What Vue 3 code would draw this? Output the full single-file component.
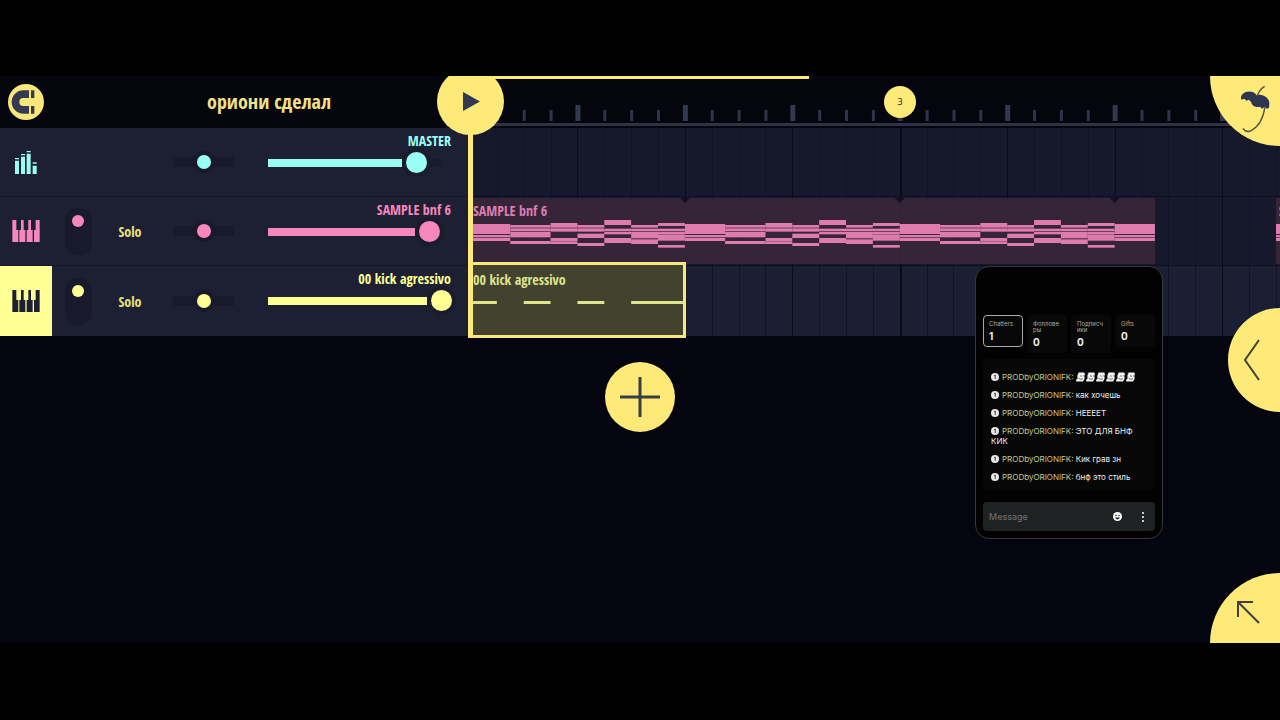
<script setup>
import { ref } from 'vue'

const TICK = 26.86
const tracks = ref([
  { id: 'master', name: 'MASTER', color: '#99fff5', icon: 'mixer', volume: 85.8, pan: 50, on: true },
  { id: 'sample', name: 'SAMPLE bnf 6', color: '#f587bd', icon: 'keys', volume: 93.2, pan: 50, on: true },
  { id: 'kick', name: '00 kick agressivo', color: '#feff95', icon: 'keys', volume: 100, pan: 50, on: true, selected: true }
])

const ticks = Array.from({ length: 31 }, (_, i) => ({ i, x: i * TICK, major: i % 4 === 0, bar: i % 16 === 0 }))

/* One bar of the melody: [start tick, length, [[top, bottom], ...]], heights in thirds of a pixel */
const pattern = [
  [0, 1.5, [[87, 117], [120, 127], [129, 138]]],
  [1.5, 1.5, [[90, 98], [100, 109], [111, 127], [138, 147]]],
  [3, 1, [[84, 98], [100, 110], [129, 138], [139, 147]]],
  [4, 1, [[90, 98], [100, 110], [116, 129], [144, 153]]],
  [5, 1, [[75, 90], [101, 109], [111, 118], [129, 144]]],
  [6, 1, [[90, 98], [101, 109], [111, 130], [133, 147]]],
  [7, 1, [[84, 93], [101, 109], [111, 119], [120, 137], [150, 158]]]
]
const notes = []
for (let bar = 0; bar < 4; bar++) {
  for (const [start, len, bands] of pattern) {
    if (bar === 3 && start > 0) continue
    for (const [a, b] of bands) {
      notes.push({ x: (bar * 8 + start) * TICK, w: len * TICK, y: (a - 9) / 3, h: (b - a) / 3 })
    }
  }
}
const kicks = [[0, 1], [2, 1], [4, 1], [6, 2]]

const stats = [
  { lines: ['Chatters'], value: 1, active: true },
  { lines: ['Фоллове', 'ры'], value: 0 },
  { lines: ['Подписч', 'ики'], value: 0 },
  { lines: ['Gifts'], value: 0 }
]
const messages = [
  { text: '', stickers: 6 },
  { text: 'как хочешь' },
  { text: 'НЕЕЕЕТ' },
  { text: 'ЭТО ДЛЯ БНФ КИК' },
  { text: 'Кик грав зн' },
  { text: 'бнф это стиль' }
]
</script>

<template>
  <div class="screen">
    <main class="stage">
      <header class="top">
        <div class="top-left">
          <button class="magnet" aria-label="Snap">
            <svg viewBox="24 42 108 108" width="36" height="36">
              <path d="M87 61H70A35 35 0 0 0 70 131H87V108H70A12 12 0 0 1 70 84H87ZM93 61h10v23h-10zM93 108h10v23h-10z" />
            </svg>
          </button>
          <h1>ориони сделал</h1>
        </div>
        <div class="ruler">
          <svg class="ruler-svg" width="100%" height="52">
            <template v-for="t in ticks" :key="t.i">
              <rect v-if="t.major" :x="t.x - 2" y="29" width="5" height="16" fill="#34384f" />
              <rect v-else :x="t.x - 1" y="34" width="3" height="11" fill="#30334a" />
            </template>
            <rect x="0" y="47" width="100%" height="3" fill="#2e3249" />
            <rect x="0" y="0" width="339" height="3" fill="#fdea79" />
          </svg>
          <span class="marker">3</span>
        </div>
        <button class="play" aria-label="Play">
          <svg viewBox="0 0 17 19" width="17" height="19"><path d="M0 0L17 9.500L0 19Z" /></svg>
        </button>
      </header>

      <section class="arrange">
        <div class="strips">
          <div v-for="t in tracks" :key="t.id" class="strip" :class="{ selected: t.selected }" :style="{ '--c': t.color }">
            <button class="kind" :aria-label="t.name">
              <svg v-if="t.icon === 'mixer'" viewBox="45 243 66 69" width="22" height="23">
                <path d="M45 264h12v4h-12zM45 272h12v40h-12zM63 252h12v4h-12zM63 260h12v52h-12zM80 243h12v4h-12zM80 251h12v61h-12zM98 277h12v4h-12zM98 287h12v25h-12z" />
              </svg>
              <svg v-else viewBox="35 78 84 66" width="28" height="22">
                <path d="M36 78H48V108H54V144H36ZM62 78H70V108H75V144H57V108H62ZM84 78H92V108H97V144H79V108H84ZM106 78H118V144H101V108H106Z" />
              </svg>
            </button>
            <template v-if="t.id !== 'master'">
              <input v-model="t.on" class="mute" type="checkbox" :aria-label="t.name + ' on'" />
              <button class="solo">Solo</button>
            </template>
            <input v-model="t.pan" class="pan" type="range" min="0" max="100" :aria-label="t.name + ' pan'" />
            <div class="level">
              <label :for="'vol-' + t.id">{{ t.name }}</label>
              <input :id="'vol-' + t.id" v-model="t.volume" class="vol" type="range" min="0" max="100" step="0.1" :style="{ '--v': t.volume / 100 }" />
            </div>
          </div>
        </div>

        <div class="canvas">
          <div class="lane first"></div>
          <div class="lane second"></div>
          <div class="lane third"></div>
          <svg class="grid" width="100%" height="100%">
            <rect v-for="t in ticks" :key="t.i" :x="Math.round(t.x)" y="0" :width="t.bar ? 2 : 1" height="100%" :fill="t.major ? '#090b18' : '#101323'" />
          </svg>
          <div class="clip sample" :style="{ width: 25.5 * TICK + 'px' }">
            <svg width="100%" height="66" shape-rendering="geometricPrecision">
              <rect v-for="(n, i) in notes" :key="i" :x="n.x" :y="n.y" :width="n.w" :height="n.h" fill="#de7cae" />
              <path v-for="b in 3" :key="'m' + b" :transform="`translate(${b * 8 * TICK} 0)`" d="M-5 0H5L0 5Z" fill="#140f20" />
            </svg>
            <span>SAMPLE bnf 6</span>
          </div>
          <div class="clip sample next" :style="{ left: 30 * TICK + 'px' }">
            <svg width="100%" height="66">
              <rect v-for="(n, i) in notes.slice(0, 3)" :key="i" x="0" :y="n.y" width="60" :height="n.h" fill="#de7cae" />
            </svg>
            <span>SAMPLE bnf 6</span>
          </div>
          <div class="clip kick">
            <svg width="100%" height="100%">
              <rect v-for="k in kicks" :key="k[0]" :x="k[0] * TICK" y="36" :width="k[1] * TICK" height="3" fill="#dfe58d" />
            </svg>
            <span>00 kick agressivo</span>
          </div>
          <div class="playhead"></div>
        </div>
      </section>

      <button class="add" aria-label="Add track">
        <svg viewBox="0 0 40 40" width="40" height="40"><path d="M20 0V40M0 20H40" /></svg>
      </button>

      <button class="corner tree" aria-label="Menu">
        <svg viewBox="1140 45 93 144" width="31" height="48">
          <path d="M1143 85C1142 70 1160 60 1178 66C1185 68 1188 74 1190 76C1206 70 1228 82 1228 100L1227 114L1220 116L1215 110L1206 116L1200 110C1188 114 1176 107 1173 96L1167 89L1159 92L1153 86L1144 89Z" fill="#2d3550" />
          <path d="M1192 77C1196 65 1204 55 1214 49M1215 110C1210 145 1195 170 1175 181C1165 187 1155 184 1149 175" fill="none" stroke="#57503f" stroke-width="4" />
        </svg>
      </button>
      <button class="corner back" aria-label="Open panel">
        <svg viewBox="0 0 18 44" width="18" height="44"><path d="M16 2L2 22L16 42" /></svg>
      </button>
      <button class="corner expand" aria-label="Expand">
        <svg viewBox="0 0 24 24" width="24" height="24"><path d="M17 2H2V17M2 2L23 23" /></svg>
      </button>

      <aside class="chat">
        <div class="stats">
          <button v-for="s in stats" :key="s.lines[0]" class="stat" :class="{ active: s.active }">
            <small><template v-for="(l, i) in s.lines" :key="l"><br v-if="i" />{{ l }}</template></small>
            <b>{{ s.value }}</b>
          </button>
        </div>
        <ul class="log">
          <li v-for="(m, i) in messages" :key="i">
            <svg class="avatar" viewBox="0 0 16 16" width="8" height="8">
              <circle cx="8" cy="8" r="8" fill="#e8e8e8" />
              <path d="M6 6L8.500 4V12" fill="none" stroke="#444" stroke-width="2" />
            </svg>
            <a href="#">PRODbyORIONIFK:</a> {{ m.text }}
            <svg v-for="n in m.stickers || 0" :key="n" class="sticker" viewBox="0 0 28 30" width="9" height="10">
              <path d="M8 1H26L28 9L26 13L27 20L22 29H1L0 24L5 20L4 12Z" fill="#f4f4f4" />
              <path d="M12 13Q15 9 18 13M22 12L27 10M8 19Q15 25 22 20" fill="none" stroke="#222" stroke-width="2" />
            </svg>
          </li>
        </ul>
        <div class="compose">
          <input type="text" placeholder="Message" aria-label="Message" />
          <button aria-label="Emoji">
            <svg viewBox="0 0 18 18" width="9" height="9">
              <circle cx="9" cy="9" r="9" fill="#fff" />
              <circle cx="6" cy="7" r="1.500" fill="#222" /><circle cx="12" cy="7" r="1.500" fill="#222" />
              <path d="M4 11H14Q12 15 9 15T4 11Z" fill="#222" />
            </svg>
          </button>
          <button aria-label="More">
            <svg viewBox="0 0 4 10" width="4" height="10" fill="#fff">
              <circle cx="2" cy="1" r="1" /><circle cx="2" cy="5" r="1" /><circle cx="2" cy="9" r="1" />
            </svg>
          </button>
        </div>
      </aside>
    </main>
  </div>
</template>

<style>
body { background: #000; }
</style>

<style scoped>
* { box-sizing: border-box; }
button { border: 0; padding: 0; margin: 0; background: none; font: inherit; color: inherit; cursor: pointer; }
svg { display: block; }
.screen {
  min-height: 100vh;
  padding: 76px 0 77px;
  display: flex;
  background: #000;
  font-family: "Noto Sans Condensed", "Open Sans Condensed", "Open Sans", "Noto Sans", sans-serif;
}
.stage {
  flex: 1;
  min-width: 0;
  position: relative;
  overflow: hidden;
  display: flex;
  flex-direction: column;
  background: #04050e;
}
.top { display: flex; height: 52px; position: relative; z-index: 2; background: #05050e; }
.top-left { flex: 0 0 470px; display: flex; align-items: center; padding-left: 8px; }
.magnet { width: 36px; height: 36px; border-radius: 50%; background: #fbe67b; fill: #343a52; }
h1 { flex: 1; margin: 0; padding-right: 139px; text-align: right; white-space: nowrap; font-size: 20px; font-weight: 500; line-height: 24px; color: #f3e283; }
.ruler { flex: 1; min-width: 0; position: relative; overflow: hidden; }
.marker {
  position: absolute; left: 414px; top: 10px; width: 32px; height: 32px; border-radius: 50%;
  background: #fdea79; color: #26262c; font: 9px/32px "Noto Sans", sans-serif; text-align: center;
}
.play {
  position: absolute; left: 437px; top: -8px; width: 67px; height: 67px; border-radius: 50%;
  background: #fdea79; fill: #313a52; display: flex; align-items: center; justify-content: center; padding-left: 2px;
}
.arrange { display: flex; height: 208px; }
.strips { flex: 0 0 470px; }
.strip {
  height: 69px; display: grid; grid-template-columns: 52px 52px 52px 95px 1fr;
  background: #1d2032; border-bottom: 1px solid #141626;
}
.strip:last-child { height: 70px; border-bottom: 0; }
.kind { grid-column: 1; display: flex; align-items: center; justify-content: center; fill: var(--c); }
.selected .kind { background: var(--c); fill: #1d2032; }
.mute {
  appearance: none; grid-column: 2; justify-self: center; align-self: center; margin: 0;
  width: 27px; height: 47px; border-radius: 12px; background: #181a2c; display: flex; justify-content: center;
}
.mute::before { content: ""; width: 12px; height: 12px; margin-top: 7px; border-radius: 50%; background: var(--c); }
.solo { grid-column: 3; align-self: center; justify-self: center; color: #ece07e; font-weight: 500; font-size: 14px; }
.pan {
  appearance: none; grid-column: 4; align-self: center; justify-self: center; margin: 0; width: 61px; height: 22px;
  background: linear-gradient(#181a2c, #181a2c) center / 100% 10px no-repeat;
}
.pan::-webkit-slider-thumb {
  appearance: none; width: 14px; height: 14px; border-radius: 50%; background: var(--c); box-shadow: 0 0 0 4px #181a2c;
}
.level { grid-column: 5; display: flex; flex-direction: column; align-items: flex-end; padding-right: 19px; padding-top: 5px; }
.level label { color: var(--c); font-weight: 500; line-height: 16px; white-space: nowrap; font-size: 14px; }
.vol {
  appearance: none; width: 195px; height: 27px; margin: 0 -1px 0 0; flex: none;
  background:
    linear-gradient(var(--c), var(--c)) 11px center / calc(174px * var(--v) - 15px) 8px no-repeat,
    linear-gradient(#191b2c, #191b2c) 11px center / 174px 8px no-repeat;
}
.vol::-webkit-slider-thumb {
  appearance: none; width: 21px; height: 21px; border-radius: 50%; background: var(--c); box-shadow: 0 0 0 4px #1a1c2d;
}
.canvas { flex: 1; min-width: 0; position: relative; }
.lane { height: 69px; background: #16192b; border-bottom: 1px solid #0e1020; }
.lane.third { height: 70px; background: #1b1f33; border-bottom: 0; }
.grid { position: absolute; left: 0; top: 0; }
.clip { position: absolute; left: 0; overflow: hidden; }
.clip span { position: absolute; left: 3px; top: 5px; font-size: 14px; font-weight: 500; line-height: 16px; white-space: nowrap; }
.sample { top: 70px; height: 66px; background: rgba(58, 37, 59, .92); color: #dc7db0; }
.sample.next { right: 0; }
.kick { top: 134px; left: 0; width: 216px; height: 76px; border: 3px solid #fae67c; border-left: 0; background: #43422f; color: #dde48d; }
.kick span { top: 7px; }
.playhead { position: absolute; left: -2px; top: 0; width: 5px; height: 210px; background: #fdea79; }
.add {
  align-self: center; margin-top: 26px; width: 70px; height: 70px; border-radius: 50%; background: #fdea79;
  display: flex; align-items: center; justify-content: center;
}
.add path { stroke: #363d45; stroke-width: 3; }
.corner { position: absolute; z-index: 3; border-radius: 50%; background: #fdea79; }
.corner svg { position: absolute; }
.tree { width: 140px; height: 140px; right: -70px; top: -70px; }
.tree svg { left: 30px; top: 79px; }
.back { width: 104px; height: 104px; right: -52px; top: calc(50% - 52px); }
.back svg { left: 15px; top: 30px; }
.expand { width: 140px; height: 140px; right: -70px; bottom: -70px; }
.expand svg { left: 26px; top: 27px; }
.back path, .expand path { fill: none; stroke: #453f3a; stroke-width: 2; }
.chat {
  position: absolute; z-index: 3; right: 117px; top: 190px; width: 188px; padding: 48px 7px 7px;
  border: 1px solid #36373b; border-radius: 14px; background: #020202;
  font-family: Inter, sans-serif; color: #eee;
}
.stats { display: grid; grid-template-columns: repeat(4, 1fr); gap: 4px; align-items: start; height: 38px; }
.stat {
  padding: 5px 0 4px 5px; border: 1px solid #080808; border-radius: 4px; background: #080808; text-align: left;
}
.stat.active { border-color: #aaa; }
.stat small { display: block; font-size: 6px; line-height: 6px; padding-bottom: 3px; color: #aaa; white-space: nowrap; }
.stat b { display: block; font-size: 10px; line-height: 12px; font-weight: 700; }
.log { list-style: none; margin: 6px 0 12px; padding: 13px 8px 0; border-radius: 4px; background: #070707; font-size: 8px; line-height: 10px; }
.log li { padding-bottom: 8px; }
.log svg { display: inline-block; vertical-align: -1px; }
.log .avatar { margin-right: 3px; }
.log .sticker { margin: 0 1px 0 0; vertical-align: -2px; }
.log a { color: #c4c98a; text-decoration: none; }
.compose { display: flex; align-items: center; height: 29px; padding: 0 10px 0 6px; border-radius: 4px; background: #1e2223; }
.compose input { flex: 1; min-width: 0; padding: 0; border: 0; outline: 0; background: none; color: #eee; font: 9px Inter, sans-serif; }
.compose input::placeholder { color: #707475; }
.compose button + button { margin-left: 19px; }
</style>
